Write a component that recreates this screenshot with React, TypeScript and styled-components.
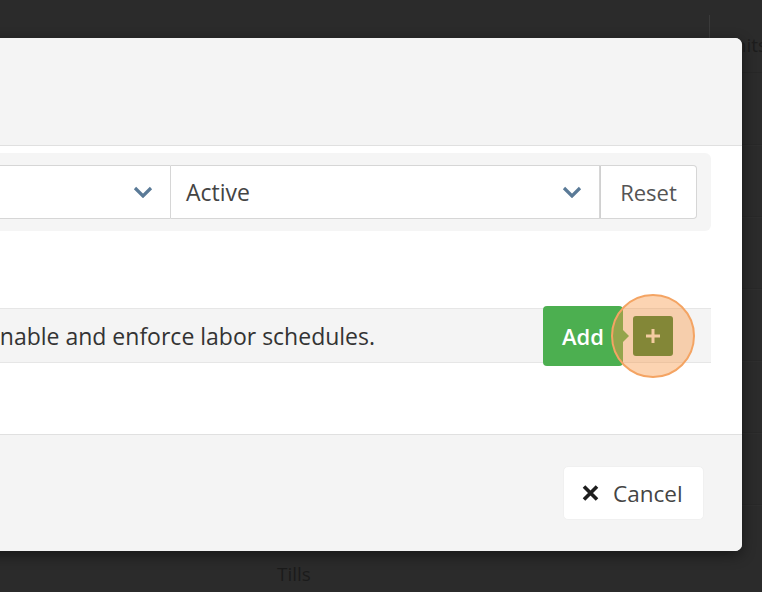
import React from "react";
import styled, { createGlobalStyle } from "styled-components";

const GlobalStyle = createGlobalStyle`
  html, body { margin: 0; padding: 0; background: #2b2b2b; }
  body { font-family: "Open Sans", "Noto Sans", sans-serif; }
  #root { width: 762px; height: 592px; position: relative; overflow: hidden; }
`;

const BgPage = styled.div`
  height: 592px;
  display: flex;
  flex-direction: column;
  background: #2b2b2b;
`;

const BgHeader = styled.div`
  display: flex;
  justify-content: flex-end;
  margin-top: 15px;
  height: 57px;
  border-bottom: 1px solid #272727;
`;

const BgHeaderCell = styled.div`
  width: 41px;
  border-left: 1px solid #3a3a3a;
  padding: 19px 0 0 11px;
  font-size: 19px;
  line-height: 22px;
  color: #1d1d1d;
  white-space: nowrap;
  overflow: hidden;
`;

const BgRows = styled.div`
  flex: 1;
  display: flex;
  flex-direction: column;
`;

const BgRow = styled.div`
  height: 71px;
  border-bottom: 1px solid #282828;
  box-shadow: 0 1px 0 #2e2e2e;
`;

const BgNav = styled.div`
  height: 42px;
  padding-left: 277px;
  font-size: 19px;
  line-height: 48px;
  color: #1b1b1b;
`;

const Modal = styled.div`
  position: absolute;
  top: 38px;
  right: 20px;
  width: 800px;
  height: 513px;
  display: flex;
  flex-direction: column;
  background: #fff;
  border-radius: 7px;
  overflow: hidden;
  box-shadow: 0 4px 14px rgba(0, 0, 0, 0.45);
`;

const ModalHeader = styled.div`
  height: 107px;
  flex-shrink: 0;
  background: #f4f4f4;
  border-bottom: 1px solid #e0e0e0;
`;

const ModalBody = styled.div`
  flex: 1;
  display: flex;
  flex-direction: column;
  padding: 7px 31px 0 30px;
  background: #fff;
`;

const FilterBar = styled.div`
  display: flex;
  height: 54px;
  padding: 12px 14px 12px 12px;
  background: #f5f5f5;
  border-radius: 6px;
`;

const SelectBox = styled.div<{ $width?: number; $first?: boolean }>`
  ${(p) => (p.$width ? `width: ${p.$width}px;` : "flex: 1;")}
  display: flex;
  align-items: center;
  justify-content: space-between;
  box-sizing: border-box;
  padding: 0 17px 0 15px;
  background: #fff;
  border: 1px solid #d6d6d6;
  border-left: ${(p) => (p.$first ? "1px solid #d6d6d6" : "none")};
  border-radius: ${(p) => (p.$first ? "4px 0 0 4px" : "0")};
  font-size: 23px;
  color: #444;
`;

const ResetButton = styled.button`
  width: 97px;
  box-sizing: border-box;
  background: #fff;
  border: 1px solid #d6d6d6;
  border-left: 1px solid #d0d0d0;
  border-radius: 0 4px 4px 0;
  font-family: inherit;
  font-size: 22px;
  color: #555;
  padding: 0;
`;

const ListRow = styled.div`
  margin-top: 77px;
  display: flex;
  align-items: center;
  height: 53px;
  padding-right: 38px;
  background: #f4f4f4;
  border-top: 1px solid #e6e6e6;
  border-bottom: 1px solid #e6e6e6;
`;

const Description = styled.div`
  flex: 1;
  padding-left: 15px;
  font-size: 23px;
  color: #333;
  white-space: nowrap;
`;

const AddButton = styled.button`
  position: relative;
  width: 80px;
  height: 60px;
  flex-shrink: 0;
  background: #4caf50;
  border: none;
  border-radius: 4px;
  color: #fff;
  font-family: inherit;
  font-size: 22px;
  font-weight: 600;
  padding: 0;
  &::after {
    content: "";
    position: absolute;
    right: -6px;
    top: 50%;
    margin-top: -6px;
    border-top: 6px solid transparent;
    border-bottom: 6px solid transparent;
    border-left: 6px solid #4caf50;
  }
`;

const PlusButton = styled.button`
  position: relative;
  margin-left: 10px;
  width: 40px;
  height: 40px;
  flex-shrink: 0;
  display: flex;
  align-items: center;
  justify-content: center;
  background: #2f7a2c;
  border: none;
  border-radius: 3px;
  padding: 0;
`;

const Highlight = styled.span`
  position: absolute;
  left: -22px;
  top: -22px;
  width: 80px;
  height: 80px;
  border-radius: 50%;
  background: rgba(247, 152, 72, 0.42);
  border: 2px solid #f4a463;
  pointer-events: none;
`;

const ModalFooter = styled.div`
  height: 85px;
  flex-shrink: 0;
  display: flex;
  justify-content: flex-end;
  align-items: flex-start;
  padding: 31px 38px 0 0;
  background: #f4f4f4;
  border-top: 1px solid #e0e0e0;
`;

const CancelButton = styled.button`
  width: 141px;
  height: 54px;
  display: flex;
  align-items: center;
  gap: 14px;
  padding: 0 0 0 18px;
  background: #fff;
  border: 1px solid #f0f0f0;
  border-radius: 5px;
  font-family: inherit;
  font-size: 22.5px;
  color: #444;
`;

const Chevron = () => (
  <svg width="20" height="12" viewBox="0 0 20 12">
    <polyline points="2,2 10,10 18,2" fill="none" stroke="#5a7a97" strokeWidth="3.2" />
  </svg>
);

const CrossIcon = () => (
  <svg width="17" height="16" viewBox="0 0 17 16">
    <path d="M2 1.5 L15 14.5 M15 1.5 L2 14.5" stroke="#1e1e1e" strokeWidth="3.6" strokeLinecap="butt" />
  </svg>
);

const PlusIcon = () => (
  <svg width="16" height="16" viewBox="0 0 16 16">
    <path d="M8 1 V15 M1 8 H15" stroke="#f2f2e0" strokeWidth="3" />
  </svg>
);

export default function App() {
  return (
    <>
      <GlobalStyle />
      <BgPage>
        <BgHeader>
          <BgHeaderCell>Units</BgHeaderCell>
        </BgHeader>
        <BgRows>
          {[0, 1, 2, 3, 4, 5].map((i) => (
            <BgRow key={i} />
          ))}
        </BgRows>
        <BgNav>Tills</BgNav>
      </BgPage>
      <Modal>
        <ModalHeader />
        <ModalBody>
          <FilterBar>
            <SelectBox $first>
              <span />
              <Chevron />
            </SelectBox>
            <SelectBox $width={429}>
              <span>Active</span>
              <Chevron />
            </SelectBox>
            <ResetButton>Reset</ResetButton>
          </FilterBar>
          <ListRow>
            <Description>Enable and enforce labor schedules.</Description>
            <AddButton>Add</AddButton>
            <PlusButton>
              <PlusIcon />
              <Highlight />
            </PlusButton>
          </ListRow>
        </ModalBody>
        <ModalFooter>
          <CancelButton>
            <CrossIcon />
            <span>Cancel</span>
          </CancelButton>
        </ModalFooter>
      </Modal>
    </>
  );
}
